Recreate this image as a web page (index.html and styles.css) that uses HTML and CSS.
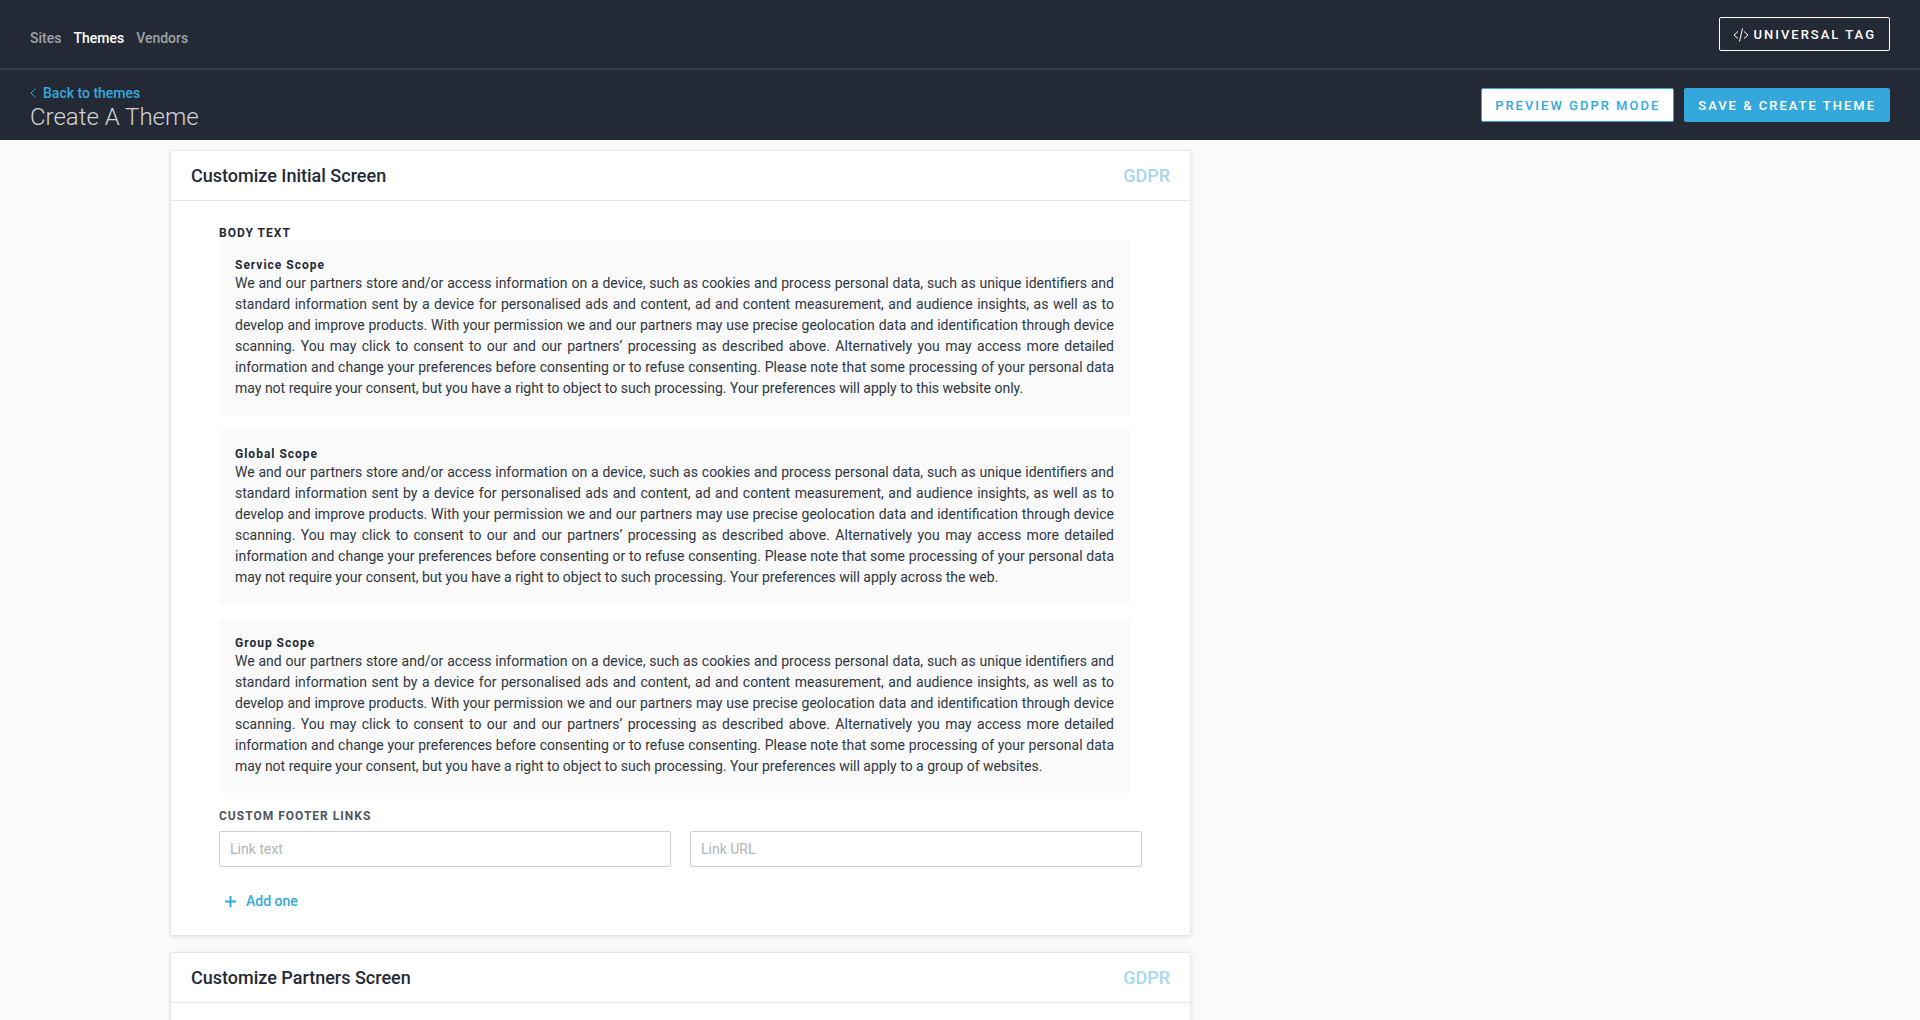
FILE: index.html
```html
<!DOCTYPE html>
<html lang="en">
<head>
<meta charset="utf-8">
<title>Create A Theme</title>
<link rel="stylesheet" href="styles.css">
</head>
<body>
<div class="app">
  <header class="topbar">
    <nav class="nav">
      <a class="nav-link" href="#">Sites</a>
      <a class="nav-link active" href="#">Themes</a>
      <a class="nav-link" href="#">Vendors</a>
    </nav>
    <button class="btn btn-ghost" type="button">
      <svg class="code-icon" viewBox="0 0 16 14" width="16" height="14" aria-hidden="true"><path d="M5 3.500L1 7L5 10.500M11 3.500L15 7L11 10.500M9.500 .5L6.500 13.500"/></svg>
      <span>UNIVERSAL TAG</span>
    </button>
  </header>
  <div class="subbar">
    <div class="heading">
      <a class="back" href="#">
        <svg class="back-icon" viewBox="0 0 6 10" width="6" height="10" aria-hidden="true"><path d="M5.300 .8L1 5L5.300 9.200"/></svg>
        Back to themes
      </a>
      <h1 class="page-title">Create A Theme</h1>
    </div>
    <div class="actions">
      <button class="btn btn-outline" type="button">PREVIEW GDPR MODE</button>
      <button class="btn btn-primary" type="button">SAVE &amp; CREATE THEME</button>
    </div>
  </div>
  <main class="content">
    <div class="container">
      <section class="card">
        <div class="card-head">
          <h2 class="card-title">Customize Initial Screen</h2>
          <span class="tag">GDPR</span>
        </div>
        <div class="card-body">
          <h3 class="label">BODY TEXT</h3>
          <div class="scopes">
            <article class="scope">
              <h4 class="scope-title">Service Scope</h4>
              <p class="scope-text">We and our partners store and/or access information on a device, such as cookies and process personal data, such as unique identifiers and standard information sent by a device for personalised ads and content, ad and content measurement, and audience insights, as well as to develop and improve products. With your permission we and our partners may use precise geolocation data and identification through device scanning. You may click to consent to our and our partners’ processing as described above. Alternatively you may access more detailed information and change your preferences before consenting or to refuse consenting. Please note that some processing of your personal data may not require your consent, but you have a right to object to such processing. Your preferences will apply to this website only.</p>
            </article>
            <article class="scope">
              <h4 class="scope-title">Global Scope</h4>
              <p class="scope-text">We and our partners store and/or access information on a device, such as cookies and process personal data, such as unique identifiers and standard information sent by a device for personalised ads and content, ad and content measurement, and audience insights, as well as to develop and improve products. With your permission we and our partners may use precise geolocation data and identification through device scanning. You may click to consent to our and our partners’ processing as described above. Alternatively you may access more detailed information and change your preferences before consenting or to refuse consenting. Please note that some processing of your personal data may not require your consent, but you have a right to object to such processing. Your preferences will apply across the web.</p>
            </article>
            <article class="scope">
              <h4 class="scope-title">Group Scope</h4>
              <p class="scope-text">We and our partners store and/or access information on a device, such as cookies and process personal data, such as unique identifiers and standard information sent by a device for personalised ads and content, ad and content measurement, and audience insights, as well as to develop and improve products. With your permission we and our partners may use precise geolocation data and identification through device scanning. You may click to consent to our and our partners’ processing as described above. Alternatively you may access more detailed information and change your preferences before consenting or to refuse consenting. Please note that some processing of your personal data may not require your consent, but you have a right to object to such processing. Your preferences will apply to a group of websites.</p>
            </article>
          </div>
          <fieldset class="links">
            <legend class="label label-muted">CUSTOM FOOTER LINKS</legend>
            <div class="link-row">
              <input class="field" type="text" placeholder="Link text" aria-label="Link text">
              <input class="field" type="text" placeholder="Link URL" aria-label="Link URL">
            </div>
          </fieldset>
          <button class="add" type="button">
            <svg class="add-icon" viewBox="0 0 11 11" width="11" height="11" aria-hidden="true"><path d="M5.500 0V11M0 5.500H11"/></svg>
            Add one
          </button>
        </div>
      </section>
      <section class="card">
        <div class="card-head">
          <h2 class="card-title">Customize Partners Screen</h2>
          <span class="tag">GDPR</span>
        </div>
        <div class="card-body"></div>
      </section>
    </div>
  </main>
</div>
</body>
</html>
```
FILE: styles.css
```css
* { box-sizing: border-box; }

body {
  margin: 0;
  background: #fafafa;
  color: #232a36;
  font-family: "Roboto", "Liberation Sans", sans-serif;
  font-size: 14px;
}

h1, h2, h3, h4, p { margin: 0; }
a { text-decoration: none; }
button, input { font-family: inherit; }
svg { fill: none; stroke: currentColor; flex: none; }

.app { display: flex; flex-direction: column; height: 100vh; }

.topbar, .subbar {
  display: flex;
  flex: none;
  align-items: center;
  justify-content: space-between;
  height: 70px;
  padding: 0 30px;
  background: #232a36;
}
.topbar { border-bottom: 2px solid #373e49; }

.nav { display: flex; gap: 12px; padding-top: 7px; }
.nav-link { color: #9fa2a7; font-weight: 500; line-height: 20px; }
.nav-link.active { color: #fff; }

.btn {
  display: flex;
  align-items: center;
  gap: 5px;
  height: 34px;
  padding: 1px 13px 0;
  border: 1px solid #35a8db;
  border-radius: 2px;
  font-size: 13px;
  font-weight: 500;
  letter-spacing: 2px;
  line-height: 20px;
}
.btn-ghost { border-color: #fff; background: transparent; color: #fff; }
.btn-outline { background: #fff; color: #35a8db; }
.btn-primary { background: #35a8db; color: #fff; }

.heading {
  display: flex;
  flex-direction: column;
  align-items: flex-start;
  padding-top: 3px;
}
.back {
  display: flex;
  align-items: center;
  gap: 7px;
  color: #35a8db;
  font-weight: 500;
  line-height: 20px;
}
.page-title { color: #d3d4d7; font-size: 24px; font-weight: 300; line-height: 28px; }
.actions { display: flex; gap: 10px; }

.content { flex: 1; min-height: 0; overflow: hidden; padding: 10px 30px 0; }
.container {
  display: flex;
  flex-direction: column;
  align-items: flex-start;
  gap: 16px;
  max-width: 1580px;
  margin: 0 auto;
}

.card {
  width: 100%;
  max-width: 1021px;
  border: 1px solid #e7e8e9;
  border-radius: 2px;
  background: #fff;
  box-shadow: 0 1px 4px rgba(0, 0, 0, 0.1);
}
.card-head {
  display: flex;
  align-items: center;
  justify-content: space-between;
  height: 50px;
  padding: 0 20px;
  border-bottom: 1px solid #e7e8e9;
}
.card-title, .tag { font-size: 18px; font-weight: 500; line-height: 24px; }
.tag { color: #a8d8ee; }
.card-body { min-height: 160px; padding: 24px 48px; }

.label { font-size: 12px; font-weight: 700; letter-spacing: 1px; line-height: 16px; }
.label-muted { padding: 0; color: #4f5560; }

.scopes { display: grid; gap: 15px; margin-right: 12px; }
.scope { padding: 16px; background: #fafafa; }
.scope-title { font-size: 12px; font-weight: 700; letter-spacing: 1px; line-height: 16px; }
.scope-text { color: #303642; line-height: 21px; text-align: justify; }

.links { min-width: 0; margin: 15px 0 0; padding: 0; border: 0; }
.link-row { display: grid; grid-template-columns: 1fr 1fr; gap: 19px; margin-top: 7px; }
.field {
  width: 100%;
  height: 36px;
  padding: 0 10px;
  border: 1px solid #cfd0d3;
  border-radius: 2px;
  background: #fff;
  color: #232a36;
  font-size: 14px;
}
.field::placeholder { color: #b2b4b8; opacity: 1; }

.add {
  display: flex;
  align-items: center;
  gap: 10px;
  margin-top: 24px;
  padding: 0 6px;
  border: 0;
  background: transparent;
  color: #35a8db;
  font-size: 14px;
  font-weight: 500;
  line-height: 20px;
}
.add-icon { stroke-width: 2; }
.code-icon { stroke-width: 1; }
```
